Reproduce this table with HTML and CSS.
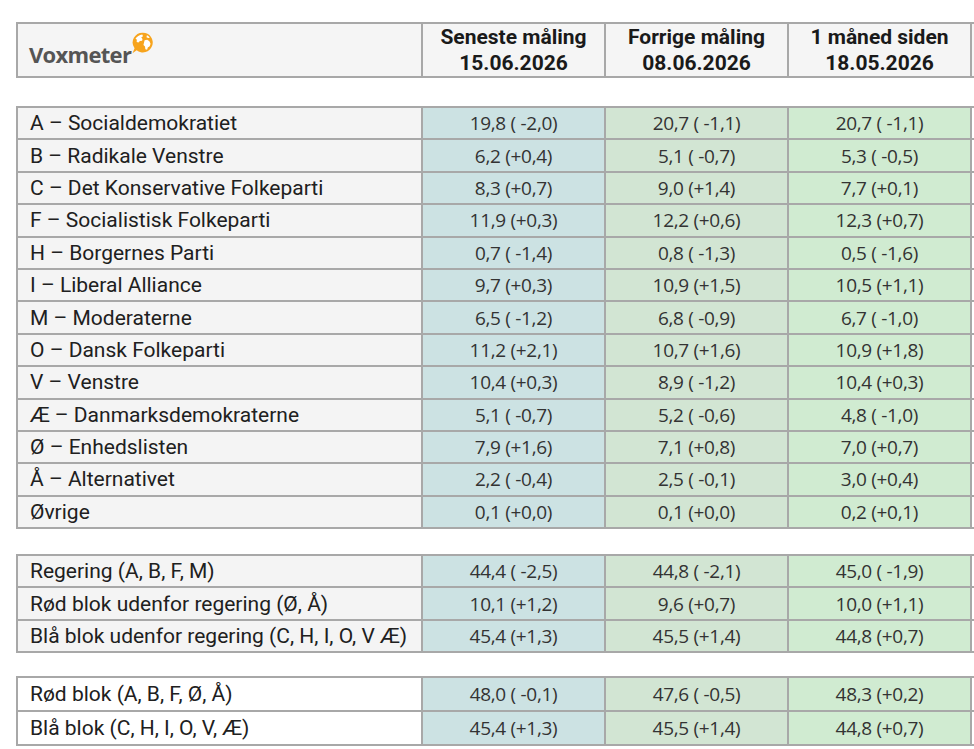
FILE: index.html
```html
<!DOCTYPE html>
<html lang="da">
<head>
<meta charset="utf-8">
<title>Voxmeter</title>
<link rel="stylesheet" href="styles.css">
</head>
<body>
<div class="page">
  <table class="poll head">
    <colgroup><col class="c-label"><col class="c-num"><col class="c-num"><col class="c-num"><col class="c-num"></colgroup>
    <tr>
      <th class="logo-cell">
        <span class="logo">
          <span class="logo-text">Voxmeter</span>
          <svg class="globe" viewBox="0 0 24 24" width="23" height="24" aria-hidden="true">
            <path d="M12.5 1.2a10.3 10.3 0 1 1-6.6 18.3L1.6 22.8l2.1-5.3A10.3 10.3 0 0 1 12.5 1.2z" fill="#f7a41d"/>
            <path d="M7.6 4.6c1.3-.9 2.7-1.4 4.2-1.5l.7 1.8-1.8 1.4 1.3 1.6-.4 1.7-2.3.3-1.5 1.7-1.9-.6.2-2.5-1.4-1.1c.7-1.1 1.7-2 2.9-2.8z" fill="#fff"/>
            <path d="M14.2 9.1l2.7-.5 2.3 1.6 1.2 2.5-.9 2.8-2 1.1-.7 2.5-1.8-.5-.4-2.9-1.6-1.5.6-2.6z" fill="#fff"/>
            <path d="M16.6 3.8c1.3.6 2.3 1.6 3 2.7l-1.7.4-1.7-1z" fill="#fff"/>
          </svg>
        </span>
      </th>
      <th>Seneste måling<br>15.06.2026</th>
      <th>Forrige måling<br>08.06.2026</th>
      <th>1 måned siden<br>18.05.2026</th>
      <th></th>
    </tr>
  </table>

  <table class="poll group-parties">
    <colgroup><col class="c-label"><col class="c-num"><col class="c-num"><col class="c-num"><col class="c-num"></colgroup>
    <tr><td class="label">A – Socialdemokratiet</td><td class="n1">19,8 ( -2,0)</td><td class="n2">20,7 ( -1,1)</td><td class="n3">20,7 ( -1,1)</td><td class="n4"></td></tr>
    <tr><td class="label">B – Radikale Venstre</td><td class="n1">6,2 (+0,4)</td><td class="n2">5,1 ( -0,7)</td><td class="n3">5,3 ( -0,5)</td><td class="n4"></td></tr>
    <tr><td class="label">C – Det Konservative Folkeparti</td><td class="n1">8,3 (+0,7)</td><td class="n2">9,0 (+1,4)</td><td class="n3">7,7 (+0,1)</td><td class="n4"></td></tr>
    <tr><td class="label">F – Socialistisk Folkeparti</td><td class="n1">11,9 (+0,3)</td><td class="n2">12,2 (+0,6)</td><td class="n3">12,3 (+0,7)</td><td class="n4"></td></tr>
    <tr><td class="label">H – Borgernes Parti</td><td class="n1">0,7 ( -1,4)</td><td class="n2">0,8 ( -1,3)</td><td class="n3">0,5 ( -1,6)</td><td class="n4"></td></tr>
    <tr><td class="label">I – Liberal Alliance</td><td class="n1">9,7 (+0,3)</td><td class="n2">10,9 (+1,5)</td><td class="n3">10,5 (+1,1)</td><td class="n4"></td></tr>
    <tr><td class="label">M – Moderaterne</td><td class="n1">6,5 ( -1,2)</td><td class="n2">6,8 ( -0,9)</td><td class="n3">6,7 ( -1,0)</td><td class="n4"></td></tr>
    <tr><td class="label">O – Dansk Folkeparti</td><td class="n1">11,2 (+2,1)</td><td class="n2">10,7 (+1,6)</td><td class="n3">10,9 (+1,8)</td><td class="n4"></td></tr>
    <tr><td class="label">V – Venstre</td><td class="n1">10,4 (+0,3)</td><td class="n2">8,9 ( -1,2)</td><td class="n3">10,4 (+0,3)</td><td class="n4"></td></tr>
    <tr><td class="label">Æ – Danmarksdemokraterne</td><td class="n1">5,1 ( -0,7)</td><td class="n2">5,2 ( -0,6)</td><td class="n3">4,8 ( -1,0)</td><td class="n4"></td></tr>
    <tr><td class="label">Ø – Enhedslisten</td><td class="n1">7,9 (+1,6)</td><td class="n2">7,1 (+0,8)</td><td class="n3">7,0 (+0,7)</td><td class="n4"></td></tr>
    <tr><td class="label">Å – Alternativet</td><td class="n1">2,2 ( -0,4)</td><td class="n2">2,5 ( -0,1)</td><td class="n3">3,0 (+0,4)</td><td class="n4"></td></tr>
    <tr><td class="label">Øvrige</td><td class="n1">0,1 (+0,0)</td><td class="n2">0,1 (+0,0)</td><td class="n3">0,2 (+0,1)</td><td class="n4"></td></tr>
  </table>

  <table class="poll group-gov">
    <colgroup><col class="c-label"><col class="c-num"><col class="c-num"><col class="c-num"><col class="c-num"></colgroup>
    <tr><td class="label">Regering (A, B, F, M)</td><td class="n1">44,4 ( -2,5)</td><td class="n2">44,8 ( -2,1)</td><td class="n3">45,0 ( -1,9)</td><td class="n4"></td></tr>
    <tr><td class="label">Rød blok udenfor regering (Ø, Å)</td><td class="n1">10,1 (+1,2)</td><td class="n2">9,6 (+0,7)</td><td class="n3">10,0 (+1,1)</td><td class="n4"></td></tr>
    <tr><td class="label">Blå blok udenfor regering (C, H, I, O, V Æ)</td><td class="n1">45,4 (+1,3)</td><td class="n2">45,5 (+1,4)</td><td class="n3">44,8 (+0,7)</td><td class="n4"></td></tr>
  </table>

  <table class="poll group-blocs">
    <colgroup><col class="c-label"><col class="c-num"><col class="c-num"><col class="c-num"><col class="c-num"></colgroup>
    <tr><td class="label white">Rød blok (A, B, F, Ø, Å)</td><td class="n1">48,0 ( -0,1)</td><td class="n2">47,6 ( -0,5)</td><td class="n3">48,3 (+0,2)</td><td class="n4"></td></tr>
    <tr><td class="label white">Blå blok (C, H, I, O, V, Æ)</td><td class="n1">45,4 (+1,3)</td><td class="n2">45,5 (+1,4)</td><td class="n3">44,8 (+0,7)</td><td class="n4"></td></tr>
  </table>
</div>
</body>
</html>
```

FILE: styles.css
```css
html, body {
  margin: 0;
  padding: 0;
  background: #ffffff;
  overflow: hidden;
}

.page {
  padding: 22px 0 0 16px;
  display: flex;
  flex-direction: column;
  width: 1200px;
}

.poll {
  border-collapse: collapse;
  table-layout: fixed;
  width: 1137px;
}

.group-parties { margin-top: 28px; }
.group-gov { margin-top: 25px; }
.group-blocs { margin-top: 23px; }

.c-label { width: 405px; }
.c-num { width: 183px; }

.poll td,
.poll th {
  border: 2px solid #a8a8a8;
  padding: 0;
}

.poll th {
  background: #f5f5f5;
  height: 52px;
  font-family: Roboto, "Liberation Sans", sans-serif;
  font-weight: 700;
  font-size: 21px;
  line-height: 26px;
  color: #1a1a1a;
  text-align: center;
}

.poll th.logo-cell {
  text-align: left;
  padding-left: 11px;
}

.logo {
  display: inline-flex;
  align-items: flex-start;
}

.logo-text {
  font-family: "Open Sans", "Liberation Sans", sans-serif;
  font-weight: 700;
  font-size: 22px;
  letter-spacing: -0.7px;
  color: #555555;
  padding-top: 9px;
}

.globe {
  margin-left: 0;
  margin-top: -1px;
}

.poll td {
  height: 30.4px;
}

.group-blocs td {
  height: 32px;
}

.label {
  background: #f4f4f4;
  font-family: Roboto, "Liberation Sans", sans-serif;
  font-size: 21px;
  color: #202020;
  padding-left: 12px !important;
  white-space: nowrap;
}

.label.white {
  background: #ffffff;
}

.n1, .n2, .n3, .n4 {
  font-family: "Open Sans", "Liberation Sans", sans-serif;
  font-size: 19px;
  letter-spacing: -0.3px;
  color: #333333;
  text-align: center;
}

.n1 { background: #cce2e3; }
.n2 { background: #d2e5d3; }
.n3 { background: #d0ebd1; }
.n4 { background: #ffffff; }
```
